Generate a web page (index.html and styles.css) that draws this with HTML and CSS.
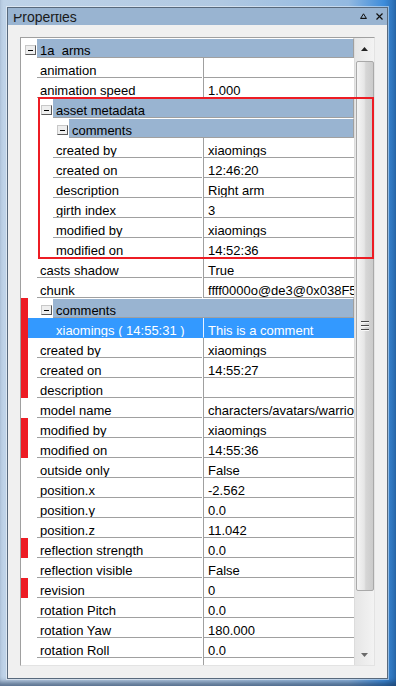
FILE: index.html
```html
<!DOCTYPE html>
<html lang="en">

<head>
  <meta charset="UTF-8">
  <meta name="viewport" content="width=device-width, initial-scale=1.0">
  <title>Properties</title>
  <link rel="stylesheet" href="styles.css">
</head>

<body>
  <div class="window">
    <div class="frame">
      <div class="titlebar">
        <div class="title"><span>Properties</span></div>
        <div class="title-buttons">
          <svg width="7" height="6" viewBox="0 0 7 6"><path d="M3.5 0.8 L6.3 5.3 L0.7 5.3 Z" fill="none" stroke="#111" stroke-width="1"/><path d="M0.5 5.5 H6.5" stroke="#111" stroke-width="1"/></svg>
          <svg width="7" height="7" viewBox="0 0 7 7"><path d="M0.5 0.5 L6.5 6.5 M6.5 0.5 L0.5 6.5" stroke="#111" stroke-width="1.2"/></svg>
        </div>
      </div>

      <div class="panel">
        <div class="list">
          <div class="rows">
            <div class="row l1 cat"><div class="gut"><span class="toggle"></span></div><div class="band">1a&nbsp; arms</div></div>
            <div class="row l1"><div class="gut"></div><div class="name">animation</div><div class="val"></div></div>
            <div class="row l1"><div class="gut"></div><div class="name">animation speed</div><div class="val">1.000</div></div>
            <div class="row l2 cat"><div class="gut"><span class="toggle"></span></div><div class="band">asset metadata</div></div>
            <div class="row l3 cat"><div class="gut"><span class="toggle"></span></div><div class="band">comments</div></div>
            <div class="row l2"><div class="gut"></div><div class="name">created by</div><div class="val">xiaomings</div></div>
            <div class="row l2"><div class="gut"></div><div class="name">created on</div><div class="val">12:46:20</div></div>
            <div class="row l2"><div class="gut"></div><div class="name">description</div><div class="val">Right arm</div></div>
            <div class="row l2"><div class="gut"></div><div class="name">girth index</div><div class="val">3</div></div>
            <div class="row l2"><div class="gut"></div><div class="name">modified by</div><div class="val">xiaomings</div></div>
            <div class="row l2"><div class="gut"></div><div class="name">modified on</div><div class="val">14:52:36</div></div>
            <div class="row l1"><div class="gut"></div><div class="name">casts shadow</div><div class="val">True</div></div>
            <div class="row l1"><div class="gut"></div><div class="name">chunk</div><div class="val">ffff0000o@de3@0x038F5</div></div>
            <div class="row l2 cat"><div class="gut"><span class="mark"></span><span class="toggle"></span></div><div class="band">comments</div></div>
            <div class="row l2 sel"><div class="gut"><span class="mark"></span></div><div class="name">xiaomings ( 14:55:31 )</div><div class="val">This is a comment</div></div>
            <div class="row l1"><div class="gut"><span class="mark"></span></div><div class="name">created by</div><div class="val">xiaomings</div></div>
            <div class="row l1"><div class="gut"><span class="mark"></span></div><div class="name">created on</div><div class="val">14:55:27</div></div>
            <div class="row l1"><div class="gut"><span class="mark"></span></div><div class="name">description</div><div class="val"></div></div>
            <div class="row l1"><div class="gut"></div><div class="name">model name</div><div class="val">characters/avatars/warrior</div></div>
            <div class="row l1"><div class="gut"><span class="mark"></span></div><div class="name">modified by</div><div class="val">xiaomings</div></div>
            <div class="row l1"><div class="gut"><span class="mark"></span></div><div class="name">modified on</div><div class="val">14:55:36</div></div>
            <div class="row l1"><div class="gut"></div><div class="name">outside only</div><div class="val">False</div></div>
            <div class="row l1"><div class="gut"></div><div class="name">position.x</div><div class="val">-2.562</div></div>
            <div class="row l1"><div class="gut"></div><div class="name">position.y</div><div class="val">0.0</div></div>
            <div class="row l1"><div class="gut"></div><div class="name">position.z</div><div class="val">11.042</div></div>
            <div class="row l1"><div class="gut"><span class="mark"></span></div><div class="name">reflection strength</div><div class="val">0.0</div></div>
            <div class="row l1"><div class="gut"></div><div class="name">reflection visible</div><div class="val">False</div></div>
            <div class="row l1"><div class="gut"><span class="mark"></span></div><div class="name">revision</div><div class="val">0</div></div>
            <div class="row l1"><div class="gut"></div><div class="name">rotation Pitch</div><div class="val">0.0</div></div>
            <div class="row l1"><div class="gut"></div><div class="name">rotation Yaw</div><div class="val">180.000</div></div>
            <div class="row l1"><div class="gut"></div><div class="name">rotation Roll</div><div class="val">0.0</div></div>
            <div class="row l1"><div class="gut"></div><div class="name">scale</div><div class="val">1.000</div></div>
          </div>

          <div class="scrollbar">
            <div class="arrow-up">
              <svg width="7" height="4" viewBox="0 0 7 4"><path d="M3.5 0 L7 4 L0 4 Z" fill="#222"/></svg>
            </div>
            <div class="thumb">
              <svg width="8" height="10" viewBox="0 0 8 10"><path d="M0 0.5 H8 M0 4.5 H8 M0 8.5 H8" stroke="#4a4a4a"/><path d="M0 1.5 H8 M0 5.5 H8 M0 9.5 H8" stroke="#f8f8f8"/></svg>
            </div>
            <div class="arrow-down">
              <svg width="7" height="4" viewBox="0 0 7 4"><path d="M0 0 L7 0 L3.5 4 Z" fill="#6a6a6a"/></svg>
            </div>
          </div>

          <!-- annotation box around the asset metadata group -->
          <div class="highlight"></div>
        </div>
      </div>
    </div>
  </div>
</body>

</html>
```

FILE: styles.css
```css
* {
  box-sizing: border-box;
}

body {
  margin: 0;
  font-family: "Liberation Sans", Arial, sans-serif;
  font-size: 13px;
  color: #000;
}

/* Window frame */
.window {
  width: 396px;
  height: 686px;
  padding: 7px 8px 7px 7px;
  background: linear-gradient(to right, #bfd3e8, #b1c9e2 55%, #93b9e0 88%, #3d8cdb 97%, #2a6cb0);
  box-shadow: inset 0 -6px 5px -2px rgba(25, 50, 85, 0.6);
}

.frame {
  height: 100%;
  display: flex;
  flex-direction: column;
  border: 1px solid #58697c;
  background: #f0f0f0;
  box-shadow: 0 0 0 1px rgba(255, 255, 255, 0.45);
}

.titlebar {
  height: 17px;
  flex: none;
  display: flex;
  background: #99b4d1;
}

.title {
  flex: 1;
  padding-left: 5px;
}

.title span {
  display: block;
  margin-top: 6px;
  height: 11px;
  overflow: hidden;
  font-size: 14px;
  line-height: 6px;
  color: #1a1a1a;
}

.title-buttons {
  display: flex;
  align-items: flex-start;
  gap: 9px;
  padding: 5px 4px 0 0;
}

/* Panel & property list */
.panel {
  flex: 1;
  min-height: 0;
  display: flex;
  padding: 12px;
}

.list {
  flex: 1;
  min-height: 0;
  display: flex;
  position: relative;
  background: #fff;
  border: 1px solid;
  border-color: #a0a0a0 #e3e3e3 #e3e3e3 #a0a0a0;
}

.rows {
  flex: 1;
  min-height: 0;
  overflow: hidden;
}

.row {
  display: flex;
  height: 20px;
}

.gut {
  flex: none;
  display: flex;
  justify-content: flex-end;
  padding-right: 1px;
}

.l1 .gut { width: 16px; }
.l2 .gut { width: 32px; }
.l3 .gut { width: 48px; }

.mark {
  width: 8px;
  margin-left: -1px;
  margin-right: auto;
  background: #ed1c24;
}

.toggle {
  width: 11px;
  height: 10px;
  margin-top: 7px;
  display: flex;
  align-items: center;
  justify-content: center;
  border: 1px solid;
  border-color: #c8c8c8 #5a5a5a #5a5a5a #c8c8c8;
  background: #eeeeee;
}

.toggle::after {
  content: "";
  width: 5px;
  height: 1px;
  background: #000;
}

.name,
.val,
.band {
  height: 20px;
  line-height: 19px;
  white-space: nowrap;
  overflow: hidden;
}

.name {
  flex: 1;
  padding: 3px 0 0 3px;
  border-bottom: 1px solid #a0a0a0;
}

.val {
  flex: none;
  width: 151px;
  margin-left: 1px;
  padding: 3px 0 0 4px;
  border-left: 1px solid #a0a0a0;
  border-bottom: 1px solid #a0a0a0;
}

.band {
  flex: 1;
  padding: 2px 0 0 3px;
  background: #99b4d1;
  border-top: 1px solid #fff;
  border-bottom: 1px solid #a0a0a0;
  border-right: 1px solid #a0a0a0;
}

.row.sel {
  background: #3399ff;
  color: #fff;
}

.sel .name {
  border-bottom-color: transparent;
}

.sel .val {
  border-left-color: #e8f2ff;
  border-bottom-color: transparent;
}

/* Scrollbar */
.scrollbar {
  width: 20px;
  display: flex;
  flex-direction: column;
  border-left: 1px solid #dcdcdc;
  background: linear-gradient(to right, #e6e6e6, #f3f3f3);
}

.arrow-up,
.arrow-down {
  height: 20px;
  flex: none;
  display: flex;
  justify-content: center;
  align-items: flex-start;
}

.arrow-up {
  padding-top: 9px;
}

.arrow-down {
  margin-top: auto;
  padding-top: 8px;
}

.thumb {
  height: 530px;
  flex: none;
  margin: 3px 0 0 1px;
  display: flex;
  align-items: center;
  justify-content: center;
  border: 1px solid #a9a9a9;
  border-radius: 2px;
  background: linear-gradient(to right, #f5f5f5, #e6e6e6 45%, #d6d6d6 55%, #cbcbcb);
}

/* Red annotation frame */
.highlight {
  position: absolute;
  left: 17px;
  top: 59px;
  width: 336px;
  height: 162px;
  border: 2px solid #ed1c24;
}
```
